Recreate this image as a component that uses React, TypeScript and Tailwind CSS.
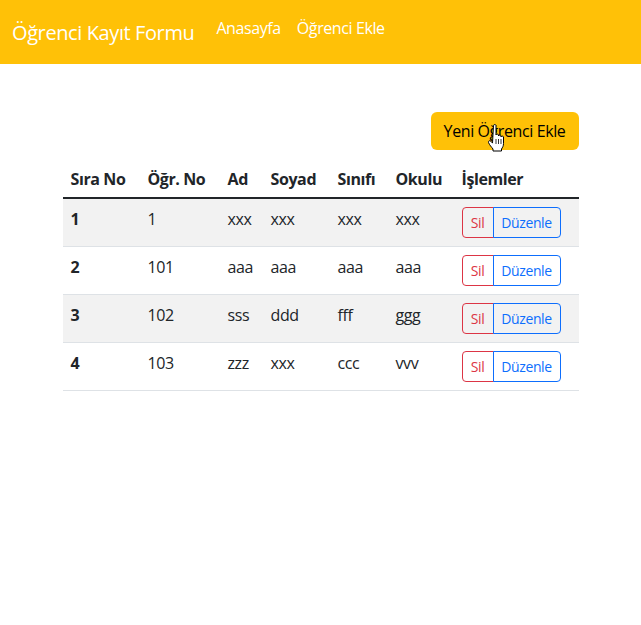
import { useState } from 'react';

type Student = { no: string; ad: string; soyad: string; sinif: string; okul: string };

const initial: Student[] = [
  { no: '1', ad: 'xxx', soyad: 'xxx', sinif: 'xxx', okul: 'xxx' },
  { no: '101', ad: 'aaa', soyad: 'aaa', sinif: 'aaa', okul: 'aaa' },
  { no: '102', ad: 'sss', soyad: 'ddd', sinif: 'fff', okul: 'ggg' },
  { no: '103', ad: 'zzz', soyad: 'xxx', sinif: 'ccc', okul: 'vvv' },
];

function HandCursor() {
  return (
    <svg className="absolute left-[488px] top-[123px] w-[20px] h-[30px] pointer-events-none" viewBox="0 0 20 30">
      <path
        d="M5.5 2.5c0-1.2 2.5-1.2 2.5 0v9.5c0-1.2 2.5-1.2 2.5 0v1c0-1.2 2.5-1.2 2.5 0v1c0-1.2 2.5-1.2 2.5 0v6.5c0 2.5-1 4-2 5.5v2h-8.5v-2c-1.5-2-3.5-4-4.5-6.5c-.6-1.5 1.2-2.5 2.5-1.2l1.5 1.8z"
        fill="#fff"
        stroke="#000"
        strokeWidth={1}
        strokeLinejoin="round"
      />
      <path d="M8 16v5M10.5 16v5M13 16v5" stroke="#000" strokeWidth={0.8} />
    </svg>
  );
}

export default function App() {
  const [students, setStudents] = useState(initial);

  return (
    <div className="relative min-h-[625px] bg-white text-[#212529] tracking-tight font-['Segoe_UI','Open_Sans','Noto_Sans',sans-serif]">
      {/* Navbar */}
      <nav className="h-16 bg-[#ffc107] px-3 flex items-start">
        <a href="#" className="mt-[18px] mr-[14px] text-xl leading-[30px] text-white">
          Öğrenci Kayıt Formu
        </a>
        <div className="mt-[16px] flex">
          <a href="#" className="px-2 text-base leading-6 text-white">Anasayfa</a>
          <a href="#" className="px-2 text-base leading-6 text-white">Öğrenci Ekle</a>
        </div>
      </nav>

      {/* Content */}
      <div className="w-[516px] mx-auto mt-12">
        <div className="flex justify-end mb-[7px]">
          <button className="h-[38px] w-[148px] bg-[#ffc107] text-black text-base rounded-md">
            Yeni Öğrenci Ekle
          </button>
        </div>

        <table className="w-full table-fixed border-collapse text-base leading-6">
          <colgroup>
            <col className="w-[77px]" />
            <col className="w-[80px]" />
            <col className="w-[43px]" />
            <col className="w-[67px]" />
            <col className="w-[58px]" />
            <col className="w-[66px]" />
            <col className="w-[125px]" />
          </colgroup>
          <thead>
            <tr className="border-b-2 border-[#212529]">
              {['Sıra No', 'Öğr. No', 'Ad', 'Soyad', 'Sınıfı', 'Okulu', 'İşlemler'].map((h) => (
                <th key={h} className="px-2 pt-[10px] pb-[6px] text-left font-bold align-top whitespace-nowrap">{h}</th>
              ))}
            </tr>
          </thead>
          <tbody>
            {students.map((s, i) => (
              <tr key={i} className={`border-b border-[#dee2e6] ${i % 2 === 0 ? 'bg-[#f2f2f2]' : 'bg-white'}`}>
                <th className="p-2 text-left font-bold align-top">{i + 1}</th>
                <td className="p-2 align-top">{s.no}</td>
                <td className="p-2 align-top">{s.ad}</td>
                <td className="p-2 align-top">{s.soyad}</td>
                <td className="p-2 align-top">{s.sinif}</td>
                <td className="p-2 align-top">{s.okul}</td>
                <td className="p-2 align-top">
                  <div className="flex">
                    <button
                      onClick={() => setStudents(students.filter((_, j) => j !== i))}
                      className="h-[31px] w-[32px] border border-[#dc3545] text-[#dc3545] text-sm rounded-l-[4px]"
                    >
                      Sil
                    </button>
                    <button className="h-[31px] w-[68px] -ml-px border border-[#0d6efd] text-[#0d6efd] text-sm rounded-r-[4px]">
                      Düzenle
                    </button>
                  </div>
                </td>
              </tr>
            ))}
          </tbody>
        </table>
      </div>

      <HandCursor />
    </div>
  );
}
